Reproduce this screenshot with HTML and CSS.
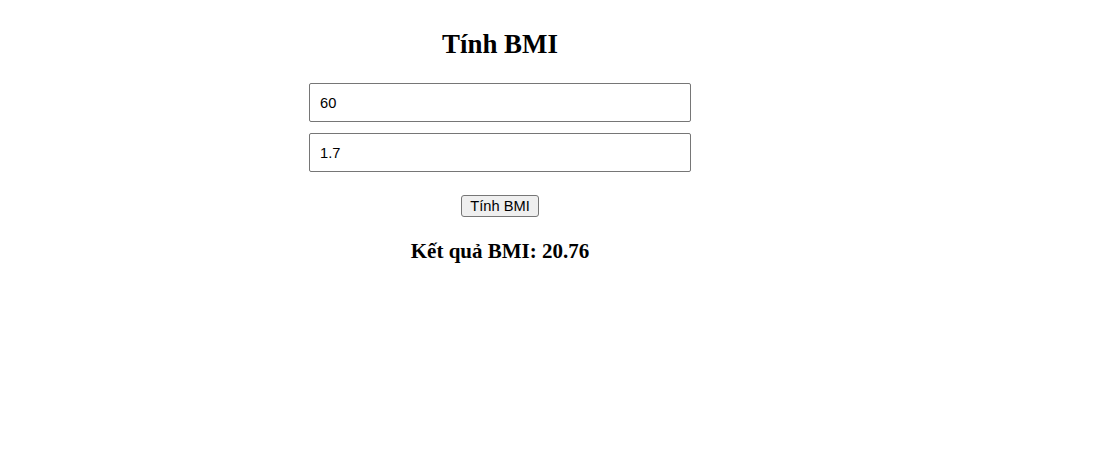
FILE: index.html
```html
<!DOCTYPE html>
<html lang="vi">
<head>
<meta charset="utf-8">
<title>Tính BMI</title>
<link rel="stylesheet" href="styles.css">
</head>
<body>
<div class="app">
  <h2 class="title">Tính BMI</h2>
  <div class="fields">
    <input class="field" type="text" value="60">
    <input class="field" type="text" value="1.7">
  </div>
  <div class="actions">
    <button class="btn" type="button">Tính BMI</button>
  </div>
  <h3 class="result">Kết quả BMI: 20.76</h3>
</div>
</body>
</html>
```

FILE: styles.css
```css
html, body {
  margin: 0;
  padding: 0;
  background: #ffffff;
}

body {
  font-family: "Liberation Serif", "Times New Roman", serif;
  color: #000000;
}

.app {
  width: 382px;
  margin-left: 309px;
  padding-top: 29px;
  text-align: center;
}

.title {
  margin: 0 0 24px;
  font-size: 26.9px;
  font-weight: bold;
  line-height: 30px;
}

.fields {
  display: flex;
  flex-direction: column;
  gap: 11px;
}

.field {
  display: block;
  box-sizing: border-box;
  width: 382px;
  height: 39px;
  margin: 0;
  padding: 0 10px;
  border: 1px solid #767676;
  border-radius: 2px;
  font-family: "Liberation Sans", Arial, sans-serif;
  font-size: 14.67px;
  color: #000000;
  background: #ffffff;
  outline: none;
}

.actions {
  padding-top: 23px;
  display: flex;
  justify-content: center;
}

.btn {
  box-sizing: border-box;
  width: 78px;
  height: 22px;
  margin: 0;
  padding: 0;
  border: 1px solid #767676;
  border-radius: 3px;
  background: #efefef;
  color: #000000;
  font-family: "Liberation Sans", Arial, sans-serif;
  font-size: 14.67px;
  line-height: 20px;
}

.result {
  margin: 22px 0 0;
  font-size: 21px;
  font-weight: bold;
  line-height: 24px;
}
```
